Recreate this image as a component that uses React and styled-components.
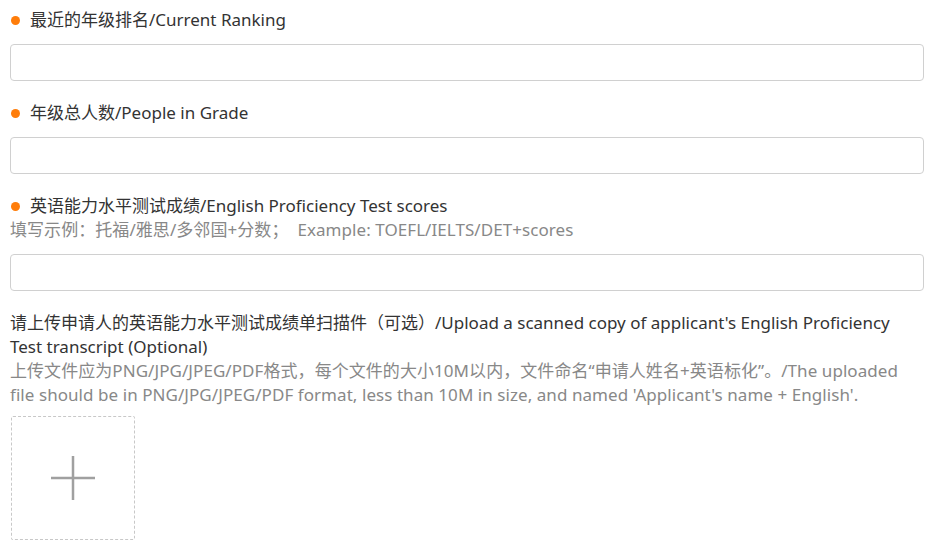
import React from "react";
import styled, { createGlobalStyle } from "styled-components";

const Global = createGlobalStyle`
    body {
        margin: 0;
        background: #fff;
        font-family: "Noto Sans", "Noto Sans CJK SC", sans-serif;
    }
`

const Page = styled.div`
    padding: 8px 13px 0 10px;
    display: flex;
    flex-direction: column;
`

const Field = styled.div`
    display: flex;
    flex-direction: column;
    margin-bottom: 20px;
`

const Label = styled.div`
    display: flex;
    align-items: center;
    font-size: 17px;
    line-height: 24px;
    color: #333;

    &::before {
        content: '';
        display: ${props => props.required ? 'block' : 'none'};
        width: 9px;
        height: 9px;
        border-radius: 50%;
        background: #ff7d0a;
        margin: 0 10px 0 1px;
        flex-shrink: 0;
    }
`

const Title = styled.div`
    font-size: 17px;
    line-height: 24px;
    color: #333;
`

const Hint = styled.div`
    font-size: 17px;
    line-height: 24px;
    color: #888;
    letter-spacing: 0.06px;
`

const Input = styled.input`
    box-sizing: border-box;
    width: 100%;
    height: 37px;
    margin-top: 12px;
    border: 1px solid #d0d0d0;
    border-radius: 4px;
    outline: none;
    padding: 0 10px;
    font-size: 16px;
`

const Upload = styled.div`
    box-sizing: border-box;
    width: 124px;
    height: 124px;
    margin-top: 9px;
    margin-left: 1px;
    border: 1px dashed #c8c8c8;
    border-radius: 2px;
    display: flex;
    align-items: center;
    justify-content: center;
    cursor: pointer;
`

const App = () => {
    return <>
        <Global />
        <Page>
            <Field>
                <Label required>最近的年级排名/Current Ranking</Label>
                <Input />
            </Field>
            <Field>
                <Label required>年级总人数/People in Grade</Label>
                <Input />
            </Field>
            <Field>
                <Label required>英语能力水平测试成绩/English Proficiency Test scores</Label>
                <Hint>填写示例：托福/雅思/多邻国+分数；&nbsp; Example: TOEFL/IELTS/DET+scores</Hint>
                <Input />
            </Field>
            <Field>
                <Title>请上传申请人的英语能力水平测试成绩单扫描件（可选）/Upload a scanned copy of applicant's English Proficiency Test transcript (Optional)</Title>
                <Hint>上传文件应为PNG/JPG/JPEG/PDF格式，每个文件的大小10M以内，文件命名“申请人姓名+英语标化”。/The uploaded file should be in PNG/JPG/JPEG/PDF format, less than 10M in size, and named 'Applicant's name + English'.</Hint>
                <Upload>
                    <svg width="46" height="46" viewBox="0 0 46 46">
                        <path d="M23 1v44M1 23h44" stroke="#a0a0a0" strokeWidth="2.5" />
                    </svg>
                </Upload>
            </Field>
        </Page>
    </>
}

export default App
